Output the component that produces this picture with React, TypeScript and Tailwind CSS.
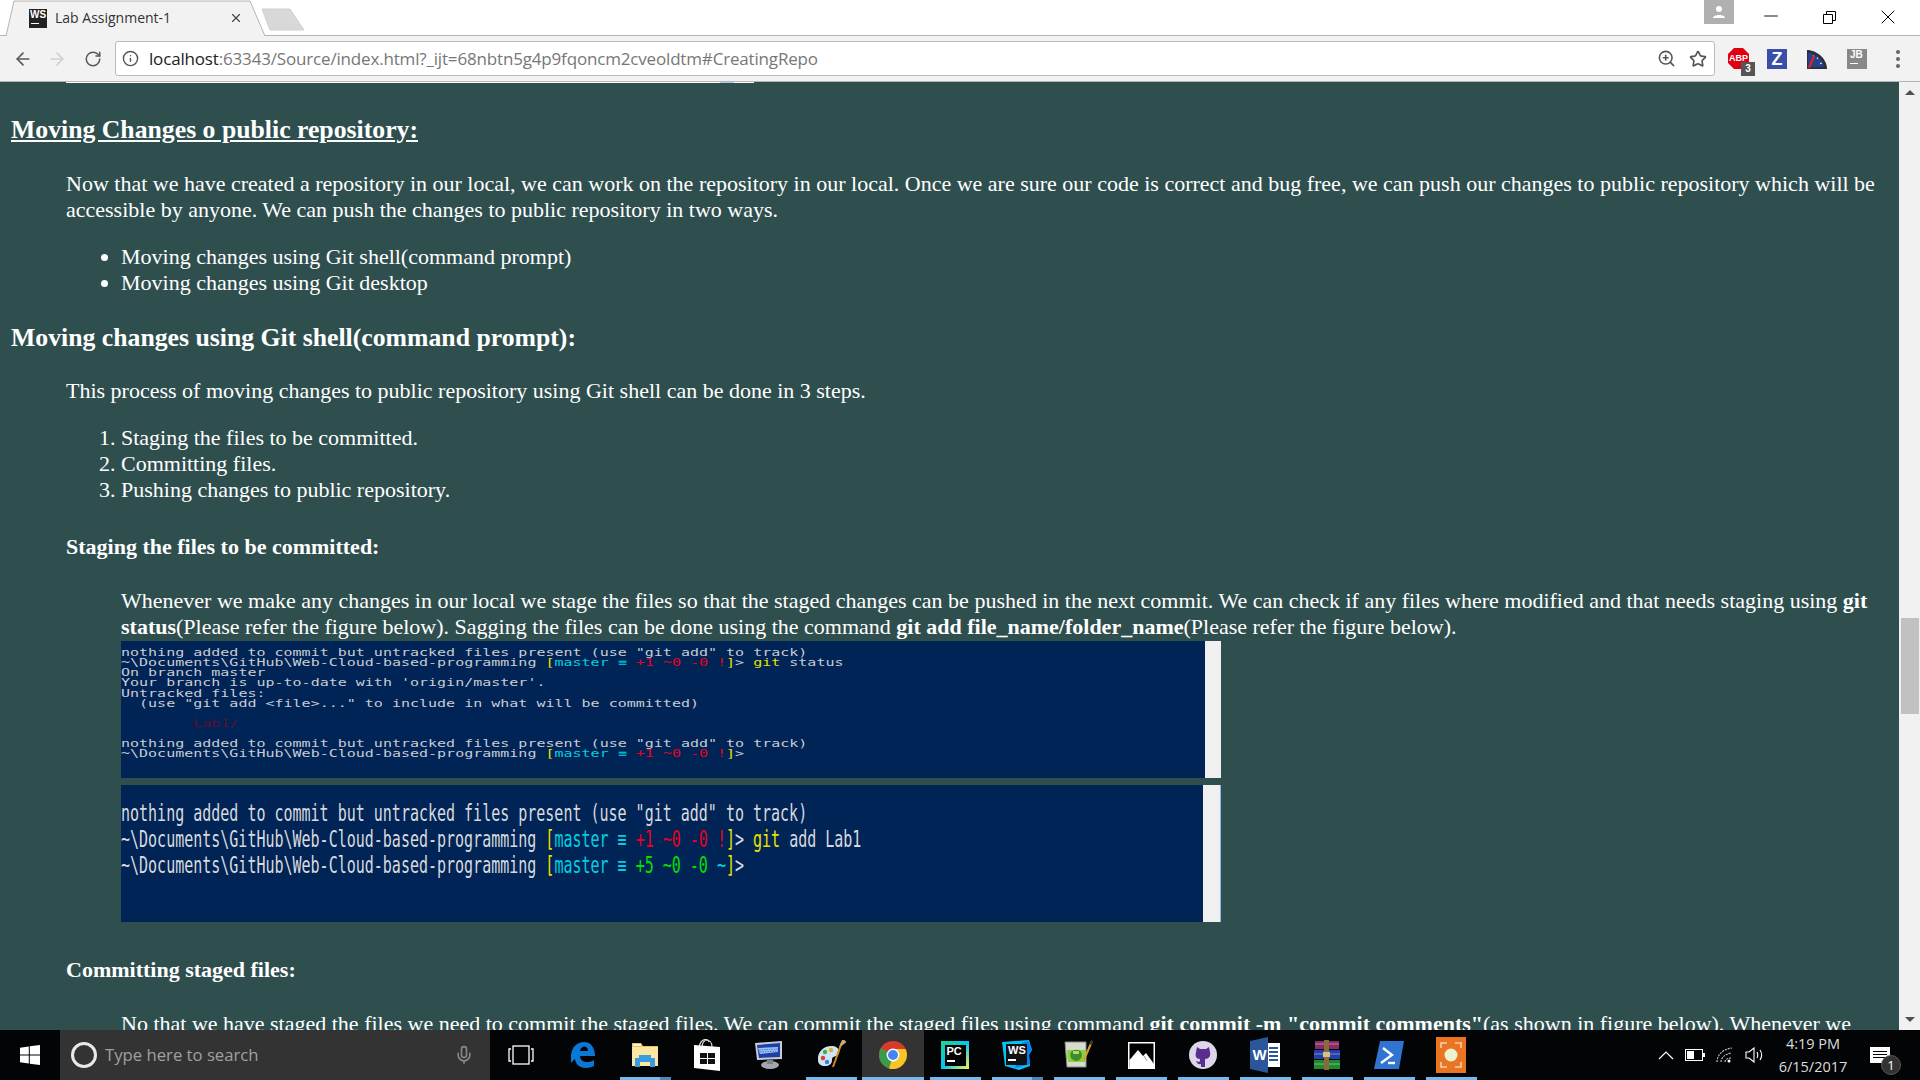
import { ArrowLeft, ArrowRight, RotateCw, Info, ZoomIn, Star, X, Minus, Mic } from 'lucide-react'
import { ReactNode } from 'react'

const WinPanes = ({ color = '#fff', size = 20 }: { color?: string; size?: number }) => (
    <svg width={size} height={size} viewBox="0 0 20 20" fill={color}>
        <path d="M0 2.8 8.8 1.5V9.5H0ZM9.8 1.3 20 0V9.5H9.8ZM0 10.5H8.8V18.5L0 17.2ZM9.8 10.5H20V20L9.8 18.7Z" />
    </svg>
)

const Edge = () => (
    <svg width="26" height="28" viewBox="0 0 26 28">
        <path d="M1 14C2 6 7 1 14 1c7 0 11 6 11 14H10c0 6 8 8 14 4v6c-8 4-18 2-19-7-1 1-3 2-4 4-.2-1-.2-3 0-4Zm9-4h8c0-6-7-6-8 0Z" fill="#0a78d7" />
    </svg>
)

const Folder = () => (
    <svg width="28" height="28" viewBox="0 0 28 28">
        <path d="M1 2h9l2 3h15v20H1Z" fill="#e8c261" />
        <path d="M1 6h26v19H1Z" fill="#fbe7a1" />
        <path d="M2 3h8v2H2Z" fill="#fff6d0" />
        <path d="M8 14h12v3h4v9h-5v-5H9v5H4v-9h4Z" fill="#3a9ce0" />
    </svg>
)

const Store = () => (
    <svg width="28" height="32" viewBox="0 0 28 32">
        <path d="M9 8c0-9 10-9 10 0M6 8c2-9 9-9 10-5" fill="none" stroke="#ddd" strokeWidth="1.2" />
        <path d="M1 6l26 2v24L1 29Z" fill="#fff" />
        <path d="M7 14h7v5H7ZM15 14h7v5h-7ZM7 20h7v5H7ZM15 20h7v5h-7Z" fill="#111" />
    </svg>
)

const Remote = () => (
    <svg width="30" height="30" viewBox="0 0 30 30">
        <path d="M1 3 28 1v18L3 20Z" fill="#c8ccd4" />
        <path d="M3 5 26 3v14L5 18Z" fill="#1f3fa8" />
        <path d="M4 8 24 7v5L6 14Z" fill="#9cc4f5" />
        <path d="M5 10 24 9M6 12 24 11" stroke="#2f5fc0" strokeWidth=".8" strokeDasharray="1.5 1" />
        <ellipse cx="16" cy="25" rx="9" ry="4" fill="#a4a8ae" />
        <rect x="13" y="20" width="6" height="4" fill="#80848a" />
    </svg>
)

const Paint = () => (
    <svg width="30" height="30" viewBox="0 0 30 30">
        <path d="M2 20C1 11 9 5 17 6c6 1 8 6 5 9-3 2-6 1-6 5 0 4-3 6-7 6-4 0-7-2-7-6Z" fill="#cfe4f5" />
        <circle cx="9" cy="12" r="2.2" fill="#3cb14a" />
        <circle cx="15" cy="10" r="2.2" fill="#e8b020" />
        <circle cx="7" cy="18" r="2.2" fill="#d8402c" />
        <circle cx="11" cy="22" r="2.2" fill="#3a7de0" />
        <path d="M26 2 17 27" stroke="#d08a1a" strokeWidth="2" />
        <path d="M25 5 27 0 29 2Z" fill="#c9a878" stroke="#c9a878" strokeWidth="2" />
    </svg>
)

const Chrome = () => (
    <svg width="28" height="28" viewBox="0 0 28 28">
        <circle cx="14" cy="14" r="14" fill="#d93a2e" />
        <path d="M14 14 2 7A14 14 0 0 0 10 27.4Z" fill="#3a9b48" />
        <path d="M14 14 10 27.4A14 14 0 0 0 26.5 8H14Z" fill="#f5c626" />
        <circle cx="14" cy="14" r="6.4" fill="#fff" />
        <circle cx="14" cy="14" r="5" fill="#4285f4" />
    </svg>
)

const PyCharmTile = () => (
    <div className="w-[28px] h-[28px] flex items-center justify-center bg-[linear-gradient(135deg,#21d789,#07c3f2_50%,#fcf84a)]">
        <div className="w-[21px] h-[21px] bg-black text-white pl-[2px] font-['Liberation_Sans',sans-serif] font-bold text-[11px] leading-[13px]">
            PC
            <div className="w-[8px] h-[2px] bg-white mt-[2px]" />
        </div>
    </div>
)

const WebStormTile = () => (
    <div className="relative w-[30px] h-[30px]">
        <svg className="absolute left-0 top-0" width="30" height="30" viewBox="0 0 30 30">
            <path d="M0 2 27 0l3 10-3 5 1 11-11 4L3 26Z" fill="#07c3f2" />
            <path d="M13 28 28 24l-1-10 3-5-4-8-6 2Z" fill="#087cfa" />
        </svg>
        <div className="absolute left-[4px] top-[4px] w-[21px] h-[21px] bg-[#111] text-white pl-[2px] font-['Liberation_Sans',sans-serif] font-bold text-[11px] leading-[13px]">
            WS
            <div className="w-[8px] h-[2px] bg-white mt-[2px]" />
        </div>
    </div>
)

const Notepad = () => (
    <svg width="30" height="30" viewBox="0 0 30 30">
        <path d="M1 2h21v25H3Z" fill="#d8dccb" stroke="#888" />
        <path d="M3 10h18v12H4Z" fill="#8ccf3c" />
        <path d="M7 12c3-3 8-3 10 0 2 4 0 8-4 9-5 0-8-4-6-9Z" fill="#3f8a2a" />
        <path d="M9 11h6v3H9Z" fill="#a8dd70" />
        <path d="M28 1 20 20" stroke="#d8a020" strokeWidth="2" />
        <path d="M28 1 26.5 4.5" stroke="#333" strokeWidth="2" />
    </svg>
)

const Photos = () => (
    <svg width="27" height="27" viewBox="0 0 27 27">
        <rect width="27" height="27" fill="#fff" />
        <rect x="1.5" y="1.5" width="24" height="24" fill="#000" />
        <path d="M1.5 26V18L10 8l5 6 3-3 8 11v5Z" fill="#fff" />
        <path d="M16 14l3 5" stroke="#999" strokeWidth="1" />
    </svg>
)

const Github = () => (
    <svg width="28" height="28" viewBox="0 0 28 28">
        <circle cx="14" cy="14" r="14" fill="#ddd6e8" />
        <path d="M8 6l3 2h6l3-2 1 5c1 4-1 7-5 7v8h-4v-3c-3 1-4-1-5-3 1 0 2 1 3 1 0 0 1 0 1-3-4 0-5-3-4-7Z" fill="#5c2d91" />
    </svg>
)

const Word = () => (
    <svg width="30" height="36" viewBox="0 0 30 36">
        <path d="M17 6h13v24H17Z" fill="#fff" />
        <path d="M19 11h9M19 15h9M19 19h9M19 23h9" stroke="#2b579a" strokeWidth="2" />
        <path d="M0 4 18 0v36L0 32Z" fill="#2b579a" />
        <text x="2.5" y="23" fill="#fff" fontSize="15" fontWeight="700" fontFamily="Liberation Sans">W</text>
    </svg>
)

const Rar = () => (
    <svg width="28" height="30" viewBox="0 0 28 30">
        <path d="M2 1h24v8H2Z" fill="#8b2a6a" />
        <path d="M1 10h26v9H1Z" fill="#2240a8" />
        <path d="M1 20h26v9H1Z" fill="#1f8a2e" />
        <path d="M2 4h24M1 14h26M1 24h26" stroke="#ddd" strokeWidth="1" opacity="0.5" />
        <path d="M11 0h5v30h-5Z" fill="#8a6a3a" />
        <rect x="10" y="12" width="7" height="5" fill="#d8c08a" />
    </svg>
)

const PowerShell = () => (
    <svg width="30" height="28" viewBox="0 0 30 28">
        <path d="M6 0h24l-5 28H0Z" fill="#2f74d0" />
        <path d="M9 7l9 7-11 8" fill="none" stroke="#fff" strokeWidth="2.4" />
        <path d="M14 22h7" stroke="#fff" strokeWidth="2.4" />
    </svg>
)

const Capture = () => (
    <svg width="30" height="36" viewBox="0 0 30 36">
        <rect width="30" height="36" fill="#ea7422" />
        <path d="M5 11V6h6M19 6h6v5M25 25v5h-6M11 30H5v-5" fill="none" stroke="#f8cfae" strokeWidth="1.6" />
        <circle cx="15" cy="18" r="6.5" fill="#eef3cf" />
    </svg>
)

const AppSlot = ({ children, running, active, stacked }: { children?: ReactNode; running?: boolean; active?: boolean; stacked?: boolean }) => (
    <div className={`relative w-[62px] h-full flex items-center justify-center ${active ? 'bg-[#333]' : ''}`}>
        {children}
        {running && (
            <div className={`absolute bottom-0 h-[3px] bg-[#76b9ed] flex justify-end ${active ? 'left-0 right-0' : 'left-[6px] right-[5px]'}`}>
                {stacked && <div className="w-[11px] bg-[#4f86b4]" />}
            </div>
        )}
    </div>
)

const Prompt = ({ ok, tail }: { ok?: boolean; tail?: string }) => (
    <>
        {'~\\Documents\\GitHub\\Web-Cloud-based-programming '}
        <span className="text-[#e8e000]">[</span>
        <span className="text-[#00d0e0]">master ≡ </span>
        {ok ? (
            <span className="text-[#00e000]">+5 ~0 -0 <span className="text-[#00d0e0]">~</span></span>
        ) : (
            <span className="text-[#e80020]">+1 ~0 -0 !</span>
        )}
        <span className="text-[#e8e000]">]</span>
        {'>'}
        {tail && (
            <>
                {' '}
                <span className="text-[#e8e000]">git</span>
                {' ' + tail}
            </>
        )}
    </>
)

const NOTHING = 'nothing added to commit but untracked files present (use "git add" to track)'

export default function App() {
    return (
        <div className="h-screen w-screen overflow-hidden flex flex-col bg-[#2f4f4f] font-['Liberation_Serif',serif]">
            {/* tab strip */}
            <div className="relative h-[36px] shrink-0 bg-white border-b border-[#b4b4b4] flex font-['Open_Sans',sans-serif]">
                <svg className="absolute left-0 top-0" width="312" height="36" viewBox="0 0 312 36">
                    <path d="M6 36 14 1H250L265 36" fill="#f2f2f2" stroke="#b4b4b4" />
                    <path d="M262 9H290L304 30H270Z" fill="#d8d8d8" stroke="#d0d0d0" />
                </svg>
                <div className="relative ml-[29px] mt-[9px] w-[18px] h-[19px] bg-[#222] text-white font-['Liberation_Sans',sans-serif] text-[10px] font-bold leading-[11px] text-center">
                    WS
                    <div className="w-[8px] h-[1px] bg-white ml-[2px] mt-[3px]" />
                </div>
                <div className="relative ml-[8px] mt-[8px] text-[14px] leading-[20px] text-[#333] w-[170px]">Lab Assignment-1</div>
                <X className="relative mt-[11px] ml-[4px] text-[#444]" size={14} strokeWidth={2} />
                <div className="ml-auto w-[30px] h-[24px] bg-[#b0b0b0] flex items-center justify-center mr-[26px]">
                    <svg width="12" height="12" viewBox="0 0 12 12" fill="#fff"><circle cx="6" cy="3" r="3" /><path d="M0 12c0-4 12-4 12 0Z" /></svg>
                </div>
                <div className="w-[160px] flex items-start text-black">
                    <Minus className="mt-[5px]" size={22} strokeWidth={1} />
                    <svg className="ml-[41px] mt-[11px]" width="13" height="13" viewBox="0 0 13 13" fill="none" stroke="#000"><path d="M.5 3.5h9v9h-9ZM3.5 3V.5h9v9H10" /></svg>
                    <X className="ml-[40px] mt-[5px]" size={24} strokeWidth={1} />
                </div>
            </div>

            {/* toolbar */}
            <div className="h-[46px] shrink-0 bg-[#f2f2f2] border-b border-[#b4b4b4] flex items-center">
                <ArrowLeft className="ml-[13px] text-[#5a5a5a]" size={20} />
                <ArrowRight className="ml-[14px] text-[#cfcfcf]" size={20} />
                <RotateCw className="ml-[17px] text-[#5a5a5a]" size={18} />
                <div className="ml-[13px] w-[1600px] h-[35px] bg-white border border-[#bbb] rounded-[3px] flex items-center">
                    <Info className="ml-[6px] text-[#555]" size={17} />
                    <div className="ml-[10px] font-['Open_Sans',sans-serif] text-[17px] tracking-[-0.17px] text-[#777] whitespace-pre">
                        <span className="text-[#222]">localhost</span>:63343/Source/index.html?_ijt=68nbtn5g4p9fqoncm2cveoldtm#CreatingRepo
                    </div>
                    <ZoomIn className="ml-auto text-[#555]" size={19} />
                    <Star className="ml-[13px] mr-[7px] text-[#555]" size={18} strokeWidth={2.2} />
                </div>
                <div className="relative ml-[13px] w-[21px] h-[21px]">
                    <svg className="absolute left-0 top-0" width="21" height="21" viewBox="0 0 21 21">
                        <path d="M6 0h9l6 6v9l-6 6H6l-6-6V6Z" fill="#e00012" />
                    </svg>
                    <div className="absolute left-0 top-0 w-full text-white font-['Liberation_Sans',sans-serif] text-[9px] font-bold leading-[21px] text-center">ABP</div>
                    <div className="absolute left-[13px] top-[14px] w-[14px] h-[14px] bg-[#555] text-white text-center font-['Liberation_Sans',sans-serif] text-[10px] font-bold leading-[14px]">3</div>
                </div>
                <div className="ml-[18px] w-[20px] h-[20px] bg-[#3a4fa8] text-white font-['Liberation_Sans',sans-serif] text-[18px] font-bold leading-[20px] text-center">Z</div>
                <svg className="ml-[20px]" width="20" height="20" viewBox="0 0 20 20">
                    <path d="M0 1c10 0 20 9 20 19H0Z" fill="#2a3040" />
                    <path d="M1 4c8 0 15 7 16 14H1Z" fill="#26408a" />
                    <path d="M6 6.5 7 8M11 8.5 10 10M15 14l-2 .6" stroke="#dde" strokeWidth="1.2" />
                    <path d="M2 19 7 7" stroke="#e82020" strokeWidth="2" />
                </svg>
                <div className="ml-[20px] w-[20px] h-[20px] bg-[#888] text-white font-['Liberation_Sans',sans-serif] text-[10px] font-bold leading-[12px] pl-[3px]">
                    JB
                    <div className="w-[8px] h-[1px] bg-white mt-[2px]" />
                </div>
                <div className="ml-[29px] flex flex-col gap-[3px]">
                    <div className="w-[4px] h-[4px] rounded-full bg-[#666]" />
                    <div className="w-[4px] h-[4px] rounded-full bg-[#666]" />
                    <div className="w-[4px] h-[4px] rounded-full bg-[#666]" />
                </div>
            </div>

            {/* page */}
            <div className="flex-1 min-h-0 flex">
                <div className="flex-1 min-w-0 overflow-hidden pl-[11px] pr-[11px] text-white text-[22px] leading-[26px]">
                    <div className="ml-[55px] w-[688px] h-[1px] bg-white flex justify-end">
                        <div className="mr-[20px] w-[14px] h-[1px] bg-[#a8cfe8]" />
                    </div>
                    <h3 className="mt-[32px] text-[25.74px] leading-[30px] font-bold underline">Moving Changes o public repository:</h3>
                    <p className="mt-[26px] ml-[55px]">
                        Now that we have created a repository in our local, we can work on the repository in our local. Once we are sure our code is correct and bug free, we can push our changes to public repository which will be accessible by anyone. We can push the changes to public repository in two ways.
                    </p>
                    <ul className="mt-[21px] pl-[110px] list-disc">
                        <li>Moving changes using Git shell(command prompt)</li>
                        <li>Moving changes using Git desktop</li>
                    </ul>
                    <h3 className="mt-[27px] text-[25.74px] leading-[30px] font-bold">Moving changes using Git shell(command prompt):</h3>
                    <p className="mt-[25px] ml-[55px]">This process of moving changes to public repository using Git shell can be done in 3 steps.</p>
                    <ol className="mt-[21px] pl-[110px] list-decimal">
                        <li>Staging the files to be committed.</li>
                        <li>Committing files.</li>
                        <li>Pushing changes to public repository.</li>
                    </ol>
                    <h4 className="mt-[31px] ml-[55px] font-bold">Staging the files to be committed:</h4>
                    <div className="ml-[110px]">
                        <p className="mt-[28px]">
                            Whenever we make any changes in our local we stage the files so that the staged changes can be pushed in the next commit. We can check if any files where modified and that needs staging using <b>git status</b>(Please refer the figure below). Sagging the files can be done using the command <b>git add file_name/folder_name</b>(Please refer the figure below).
                        </p>
                        {/* figure 1 */}
                        <div className="mt-[1px] w-[1100px] h-[137px] flex">
                            <div className="w-[1084px] overflow-hidden bg-[#012456] text-[#c8ccd2] font-['DejaVu_Sans_Mono',monospace] text-[15px] leading-[15px] whitespace-pre">
                                <div className="mt-[7px] origin-top-left scale-y-[0.675]">
                                    <div>{NOTHING}</div>
                                    <div><Prompt tail="status" /></div>
                                    <div>On branch master</div>
                                    <div>Your branch is up-to-date with 'origin/master'.</div>
                                    <div>Untracked files:</div>
                                    <div>  (use "git add &lt;file&gt;..." to include in what will be committed)</div>
                                    <div>&nbsp;</div>
                                    <div className="text-[#5a1030]">        Lab1/</div>
                                    <div>&nbsp;</div>
                                    <div>{NOTHING}</div>
                                    <div><Prompt /></div>
                                </div>
                            </div>
                            <div className="w-[16px] bg-[#f0f0f0]" />
                        </div>
                        {/* figure 2 */}
                        <div className="mt-[7px] w-[1100px] h-[137px] flex">
                            <div className="w-[1082px] overflow-hidden bg-[#012456] text-[#d8dade] font-['DejaVu_Sans_Mono',monospace] text-[23px] leading-[26px] whitespace-pre">
                                <div className="mt-[15px] origin-left scale-x-[0.652] w-[1600px]">
                                    <div>{NOTHING}</div>
                                    <div><Prompt tail="add Lab1" /></div>
                                    <div><Prompt ok /></div>
                                </div>
                            </div>
                            <div className="w-[18px] bg-[#f0f0f0] border-r border-[#8fb8e0]" />
                        </div>
                    </div>
                    <h4 className="mt-[35px] ml-[55px] font-bold">Committing staged files:</h4>
                    <p className="mt-[28px] ml-[110px] whitespace-nowrap">
                        No that we have staged the files we need to commit the staged files. We can commit the staged files using command <b>git commit -m "commit comments"</b>(as shown in figure below). Whenever we
                    </p>
                </div>

                {/* scrollbar */}
                <div className="w-[21px] shrink-0 bg-[#f1f1f1] flex flex-col items-center">
                    <div className="h-[21px] flex items-center justify-center shrink-0">
                        <div className="w-0 h-0 border-x-[5px] border-x-transparent border-b-[5px] border-b-[#505050]" />
                    </div>
                    <div className="mt-[515px] ml-[1px] w-[18px] h-[96px] bg-[#c1c1c1] shrink-0" />
                    <div className="mt-auto h-[21px] flex items-center justify-center shrink-0">
                        <div className="w-0 h-0 border-x-[5px] border-x-transparent border-t-[5px] border-t-[#505050]" />
                    </div>
                </div>
            </div>

            {/* taskbar */}
            <div className="h-[50px] shrink-0 bg-[#020406] flex items-center text-white">
                <div className="w-[60px] h-full flex items-center justify-center">
                    <WinPanes />
                </div>
                <div className="w-[430px] h-full bg-[#333] flex items-center text-[#a0a0a0] font-['Open_Sans',sans-serif] text-[16.7px]">
                    <div className="ml-[11px] w-[26px] h-[26px] rounded-full border-[3px] border-[#e8e8e8]" />
                    <div className="ml-[8px]">Type here to search</div>
                    <Mic className="ml-auto mr-[16px] text-[#888]" size={20} />
                </div>
                <AppSlot>
                    <svg width="26" height="20" viewBox="0 0 26 20" fill="none" stroke="#fff" strokeWidth="1.3">
                        <rect x="5" y="1" width="16" height="18" />
                        <path d="M3 4H1v12h2M23 4h2v12h-2" />
                    </svg>
                </AppSlot>
                <AppSlot><Edge /></AppSlot>
                <AppSlot running stacked><Folder /></AppSlot>
                <AppSlot><Store /></AppSlot>
                <AppSlot><Remote /></AppSlot>
                <AppSlot running><Paint /></AppSlot>
                <AppSlot running active><Chrome /></AppSlot>
                <AppSlot running><PyCharmTile /></AppSlot>
                <AppSlot running stacked><WebStormTile /></AppSlot>
                <AppSlot running><Notepad /></AppSlot>
                <AppSlot running><Photos /></AppSlot>
                <AppSlot running><Github /></AppSlot>
                <AppSlot running><Word /></AppSlot>
                <AppSlot running><Rar /></AppSlot>
                <AppSlot running><PowerShell /></AppSlot>
                <AppSlot running><Capture /></AppSlot>

                {/* tray */}
                <div className="ml-auto h-full flex items-center font-['Open_Sans',sans-serif]">
                    <svg width="16" height="10" viewBox="0 0 16 10" fill="none" stroke="#fff" strokeWidth="1.2"><path d="M1 9 8 2l7 7" /></svg>
                    <svg className="ml-[11px]" width="20" height="12" viewBox="0 0 20 12">
                        <rect x=".5" y=".5" width="17" height="11" fill="none" stroke="#fff" />
                        <rect x="2" y="2" width="7" height="8" fill="#fff" />
                        <rect x="18" y="4" width="2" height="4" fill="#fff" />
                    </svg>
                    <svg className="ml-[11px]" width="18" height="16" viewBox="0 0 18 16" fill="none" stroke="#ccc" strokeWidth="1.1">
                        <path d="M1 15C1 8 7 2 16 1M5 15c0-4 4-8 10-9M9 15c0-2 2-4 6-4" strokeDasharray="2 1" />
                        <circle cx="13" cy="14" r="1.5" fill="#fff" stroke="none" />
                    </svg>
                    <svg className="ml-[11px]" width="20" height="16" viewBox="0 0 20 16" fill="none" stroke="#fff" strokeWidth="1.1">
                        <path d="M1 5h3l5-4v14l-5-4H1ZM12 5c1 2 1 4 0 6M15 3c2 3 2 7 0 10" />
                    </svg>
                    <div className="ml-[2px] w-[92px] text-center text-[14.5px] leading-[23px] text-[#ddd]">
                        <div>4:19 PM</div>
                        <div>6/15/2017</div>
                    </div>
                    <div className="relative ml-[11px] mr-[30px] w-[20px] h-[16px] bg-white">
                        <div className="absolute left-[3px] top-[4px] w-[14px] h-[1px] bg-black" />
                        <div className="absolute left-[3px] top-[7px] w-[14px] h-[1px] bg-black" />
                        <div className="absolute left-[3px] top-[10px] w-[14px] h-[1px] bg-black" />
                        <div className="absolute left-[11px] top-[8px] w-[20px] h-[20px] rounded-full bg-[#333] border border-[#555] text-white text-[13px] leading-[18px] text-center">1</div>
                    </div>
                </div>
            </div>
        </div>
    )
}
